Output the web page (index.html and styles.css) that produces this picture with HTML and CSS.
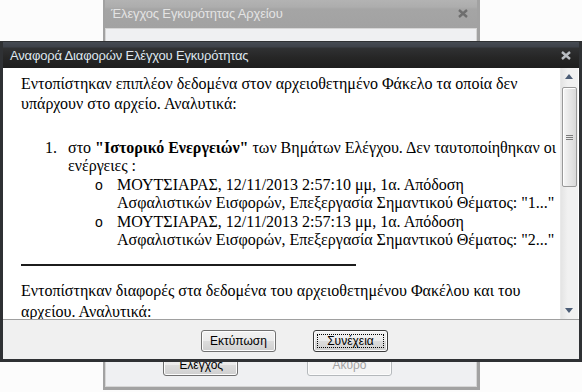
FILE: index.html
```html
<!DOCTYPE html>
<html lang="el">
<head>
<meta charset="utf-8">
<title>Αναφορά Διαφορών Ελέγχου Εγκυρότητας</title>
<link rel="stylesheet" href="styles.css">
</head>
<body>
<div class="desk">
  <div class="win back">
    <div class="back-title">
      <span class="back-caption">Έλεγχος Εγκυρότητας Αρχείου</span>
      <svg class="xbtn" width="10" height="9" viewBox="0 0 10 9"><path d="M1 1 L9 8 M9 1 L1 8" stroke="#6e6e6e" stroke-width="2.4" fill="none"/></svg>
    </div>
    <div class="back-body">
      <div class="back-buttons">
        <div class="btn back-btn">Έλεγχος</div>
        <div class="btn back-btn disabled">Άκυρο</div>
      </div>
    </div>
  </div>

  <div class="win front">
    <div class="front-title">
      <span class="front-caption">Αναφορά Διαφορών Ελέγχου Εγκυρότητας</span>
      <svg class="xbtn" width="10" height="9" viewBox="0 0 10 9"><path d="M1 1 L9 8 M9 1 L1 8" stroke="#b9bdc3" stroke-width="2.4" fill="none"/></svg>
    </div>
    <div class="front-main">
      <div class="doc">
        <p class="p1">Εντοπίστηκαν επιπλέον δεδομένα στον αρχειοθετημένο Φάκελο τα οποία δεν<br>υπάρχουν στο αρχείο. Αναλυτικά:</p>
        <div class="list">
          <div class="item">
            <span class="num">1.</span>
            <div class="item-text">
              <div>στο <b>"Ιστορικό Ενεργειών"</b> των Βημάτων Ελέγχου. Δεν ταυτοποίηθηκαν οι<br>ενέργειες :</div>
              <div class="sub">
                <span class="dot">o</span>
                <div>ΜΟΥΤΣΙΑΡΑΣ, 12/11/2013 2:57:10 μμ, 1α. Απόδοση<br>Ασφαλιστικών Εισφορών, Επεξεργασία Σημαντικού Θέματος: "1..."</div>
              </div>
              <div class="sub">
                <span class="dot">o</span>
                <div>ΜΟΥΤΣΙΑΡΑΣ, 12/11/2013 2:57:13 μμ, 1α. Απόδοση<br>Ασφαλιστικών Εισφορών, Επεξεργασία Σημαντικού Θέματος: "2..."</div>
              </div>
            </div>
          </div>
        </div>
        <div class="rule"></div>
        <p class="p2">Εντοπίστηκαν διαφορές στα δεδομένα του αρχειοθετημένου Φακέλου και του<br>αρχείου. Αναλυτικά:</p>
      </div>
      <div class="scrollbar">
        <div class="arrow up"></div>
        <div class="thumb"><span class="grip"></span><span class="grip"></span><span class="grip"></span></div>
        <div class="track-fill"></div>
        <div class="arrow down"></div>
      </div>
    </div>
    <div class="front-footer">
      <div class="btn">Εκτύπωση</div>
      <div class="btn default"><span class="focus">Συνέχεια</span></div>
    </div>
  </div>
</div>
</body>
</html>
```

FILE: styles.css
```css
html, body {
  margin: 0;
  padding: 0;
  background: #fcfcfc;
}
.desk {
  position: relative;
  width: 582px;
  height: 392px;
  overflow: hidden;
  font-family: "Liberation Sans", Arial, sans-serif;
}
.win {
  position: absolute;
  box-sizing: border-box;
  display: flex;
  flex-direction: column;
}

/* background dialog */
.back {
  left: 103px;
  top: 0;
  width: 377px;
  height: 390px;
  background: #a4a4a4;
  border-left: 2px solid #a2a2a2;
  border-right: 3px solid #a2a2a2;
  border-bottom: 3px solid #a2a2a2;
}
.back-title {
  height: 28px;
  flex: none;
  display: flex;
  align-items: center;
  justify-content: space-between;
  padding: 0 9px 1px 6px;
  box-sizing: border-box;
  background: linear-gradient(#b3b3b3 0, #adadad 7px, #a5a5a5 9px, #a2a2a2 100%);
}
.back-caption {
  color: #e3e3e3;
  font-size: 13px;
  letter-spacing: -0.15px;
}
.back-body {
  flex: 1;
  background: #eff0f2;
  border: 1px solid #d6d6d6;
  display: flex;
  flex-direction: column;
  justify-content: flex-end;
}
.back-buttons {
  display: flex;
  gap: 69px;
  padding: 0 0 10px 57px;
}
.back-btn {
  width: 83px;
  height: 23px;
}
.back-btn.disabled {
  width: 85px;
  color: #a3a3a3;
  border-color: #b5b9bc;
  background: #f4f4f4;
}

/* front dialog */
.front {
  left: 0;
  top: 41px;
  width: 582px;
  height: 321px;
  border: 3px solid #2f3134;
  border-top: 1px solid #2f3134;
  background: #f0f0f0;
}
.front-title {
  height: 26px;
  flex: none;
  display: flex;
  align-items: center;
  justify-content: space-between;
  padding: 0 8px 0 7px;
  background: linear-gradient(#464b53 0, #3d4149 5px, #303133 6px, #262626 60%, #1e1e1e 100%);
}
.front-caption {
  color: #dfe7ef;
  font-size: 13px;
  letter-spacing: -0.17px;
}
.front-main {
  height: 251px;
  flex: none;
  display: flex;
  background: #fff;
}
.doc {
  flex: 1;
  overflow: hidden;
  padding: 6px 0 0 18px;
  font-family: "Liberation Serif", "Times New Roman", serif;
  font-size: 16px;
  line-height: 18.4px;
  color: #000;
  white-space: nowrap;
}
.doc p {
  margin: 0;
}
.doc .p1 {
  line-height: 20px;
}
.list {
  margin-top: 25px;
}
.item {
  display: grid;
  grid-template-columns: 23px auto;
  padding-left: 24px;
}
.sub {
  display: grid;
  grid-template-columns: 22px auto;
  padding-left: 27px;
}
.dot {
  font-family: "Liberation Sans", Arial, sans-serif;
  font-size: 14px;
}
.rule {
  margin-top: 15px;
  width: 335px;
  height: 2px;
  background: #1c1c1c;
}
.doc .p2 {
  margin-top: 14px;
  line-height: 21px;
}

/* scrollbar */
.scrollbar {
  width: 17px;
  flex: none;
  margin-right: 1px;
  display: flex;
  flex-direction: column;
  align-items: center;
  background: linear-gradient(to right, #e4e4e4, #f1f1f1 40%, #f1f1f1);
  border-left: 1px solid #e9e9e9;
}
.arrow {
  height: 17px;
  width: 100%;
  flex: none;
  position: relative;
}
.arrow::after {
  content: "";
  position: absolute;
  left: 4px;
  width: 0;
  height: 0;
  border-left: 4px solid transparent;
  border-right: 4px solid transparent;
}
.arrow.up::after {
  top: 6px;
  border-bottom: 5px solid #4c5d76;
}
.arrow.down::after {
  top: 6px;
  border-top: 5px solid #4c5d76;
}
.thumb {
  margin-top: 2px;
  width: 15px;
  height: 100px;
  box-sizing: border-box;
  border: 1px solid #999;
  border-radius: 2px;
  background: linear-gradient(to right, #f6f6f6, #e7e7e7 50%, #d9d9d9);
  box-shadow: inset 1px 1px 0 #fff;
  display: flex;
  flex-direction: column;
  align-items: center;
  justify-content: center;
  gap: 1px;
}
.grip {
  width: 7px;
  height: 1px;
  background: #7b7b7b;
}
.track-fill {
  flex: 1;
}

/* footer */
.front-footer {
  flex: 1;
  border-top: 1px solid #a0a0a0;
  background: #f0f0f0;
  display: flex;
  justify-content: center;
  align-items: flex-start;
  gap: 37px;
  padding: 10px 0 0 7px;
}
.btn {
  box-sizing: border-box;
  width: 75px;
  height: 22px;
  border: 1px solid #707070;
  border-radius: 3px;
  background: linear-gradient(#f2f2f2 0, #ebebeb 50%, #dddddd 50%, #cfcfcf 100%);
  box-shadow: inset 0 0 0 1px #fcfcfc;
  display: flex;
  align-items: center;
  justify-content: center;
  font-family: "Liberation Sans", Arial, sans-serif;
  font-size: 12px;
  color: #000;
}
.btn.default {
  border-color: #3a3a3a;
  position: relative;
}
.btn.default::after {
  content: "";
  position: absolute;
  inset: 3px;
  border: 1px dotted #000;
}
```
